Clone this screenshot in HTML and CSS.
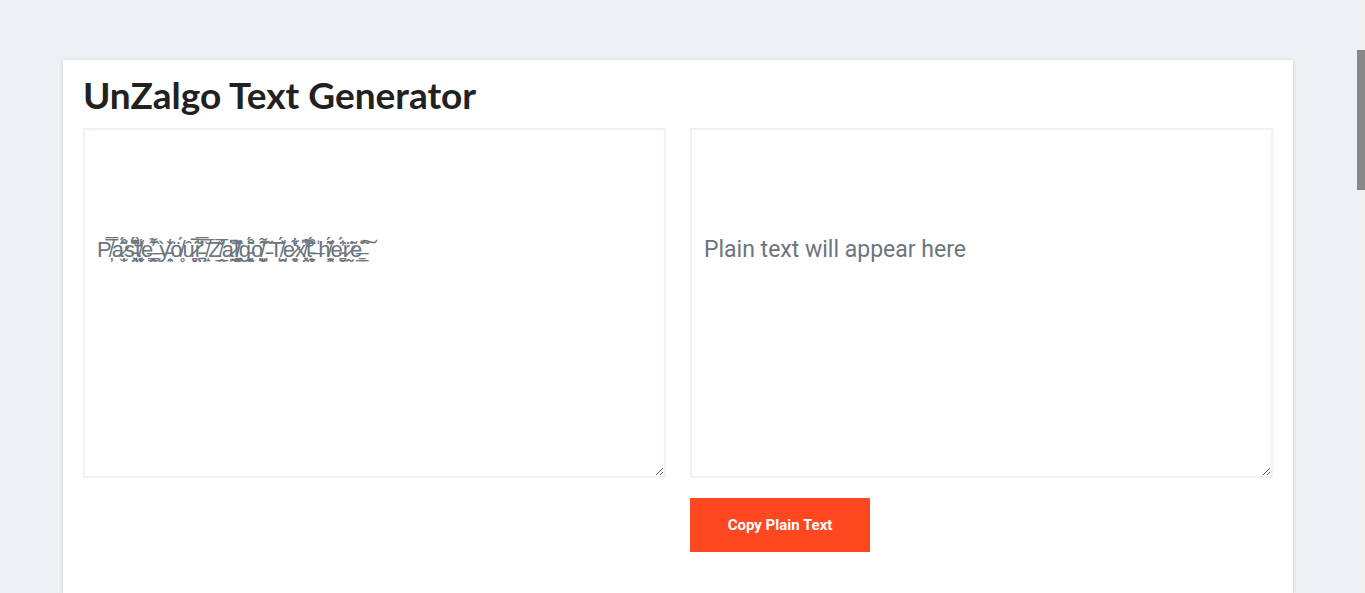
FILE: index.html
```
<!DOCTYPE html>
<html lang="en">
<head>
    <meta charset="UTF-8">
    <meta name="viewport" content="width=device-width, initial-scale=1.0">
    <title>UnZalgo Text Generator</title>
    <link rel="stylesheet" href="styles.css">
</head>
<body>
    <main>
        <section class="card">
            <h1>UnZalgo Text Generator</h1>
            <div class="columns">
                <div class="column">
                    <textarea id="zalgo-text" class="zalgo" aria-label="Zalgo text" placeholder="P&#x338;&#x305;&#x33f;&#x326;a&#x337;&#x30b;&#x344;&#x352;&#x31c;&#x32b;&#x34e;s&#x335;&#x344;&#x346;&#x313;&#x30f;&#x324;&#x349;&#x353;t&#x338;&#x312;&#x300;&#x33e;&#x354;&#x32c;&#x31e;e&#x336;&#x313;&#x34c;&#x351;&#x30a;&#x333;&#x32d;&#x347; &#x336;&#x30f;&#x326;y&#x335;&#x33e;&#x30c;&#x357;&#x32f;&#x31f;o&#x338;&#x308;&#x301;&#x325;u&#x337;&#x311;&#x303;&#x31a;&#x33b;&#x32e;r&#x335;&#x312;&#x33f;&#x350;&#x324;&#x32a; &#x338;&#x305;&#x306;&#x31d;Z&#x338;&#x33e;&#x305;&#x310;&#x32d;&#x332;a&#x337;&#x346;&#x310;&#x30d;&#x32b;&#x330;&#x34d;l&#x338;&#x34a;&#x30f;&#x313;&#x333;&#x32c;&#x353;g&#x335;&#x344;&#x30c;&#x352;&#x31f;&#x324;&#x348;o&#x338;&#x34c;&#x313;&#x311;&#x318;&#x32c;&#x33a; &#x335;&#x304;&#x30b;&#x323;T&#x338;&#x304;&#x350;&#x301;&#x33a;&#x32d;e&#x337;&#x30e;&#x312;&#x34b;&#x317;&#x32c;&#x349;x&#x338;&#x33e;&#x346;&#x30a;&#x316;&#x324;&#x353;t&#x335;&#x313;&#x35b;&#x344;&#x352;&#x31f;&#x32c; &#x336;&#x30d;&#x323;h&#x338;&#x34a;&#x30c;&#x301;&#x320;&#x32d;&#x34e;e&#x335;&#x313;&#x344;&#x333;&#x32c;r&#x337;&#x308;&#x303;&#x330;e&#x336;&#x30e;&#x303;&#x332;&#x333;&#x360;"></textarea>
                </div>
                <div class="column">
                    <textarea id="plain-text" aria-label="Plain text" placeholder="Plain text will appear here"></textarea>
                    <button type="button" class="copy">Copy Plain Text</button>
                </div>
            </div>
        </section>
    </main>
    <div class="scroll-track" aria-hidden="true">
        <div class="scroll-thumb"></div>
    </div>
</body>
</html>
```
FILE: styles.css
```
* {
    box-sizing: border-box;
}

body {
    display: flex;
    min-height: 100vh;
    margin: 0;
    background-color: #edf0f5;
    color: #212121;
    font-family: Roboto, sans-serif;
}

main {
    flex: 1;
    display: flex;
    padding: 60px 64px 0 63px;
}

.card {
    flex: 1;
    padding: 16px 20px 20px;
    background-color: white;
    box-shadow: 0 1px 4px rgba(0, 0, 0, 0.15);
}

h1 {
    margin: 0 0 14px;
    font-family: Lato, sans-serif;
    font-size: 37px;
    font-weight: 700;
    line-height: 38px;
}

.columns {
    display: flex;
    gap: 24px;
}

.column {
    flex: 1;
}

textarea {
    display: block;
    width: 100%;
    height: 350px;
    margin-bottom: 20px;
    padding: 107px 12px 12px;
    border: 2px solid #ecf2fc;
    border-radius: 0;
    background-color: white;
    color: #212121;
    font-family: Roboto, sans-serif;
    font-size: 23px;
    line-height: 26px;
    resize: both;
}

textarea:focus {
    outline: none;
    border-color: #ff481f;
}

textarea::placeholder {
    color: #6c757d;
    opacity: 1;
}

.zalgo {
    font-family: "Liberation Sans", sans-serif;
    font-size: 22px;
}

.copy {
    width: 180px;
    height: 54px;
    border: none;
    background-color: #ff481f;
    color: white;
    font-family: Roboto, sans-serif;
    font-size: 15px;
    font-weight: 700;
    cursor: pointer;
}

.scroll-track {
    width: 8px;
    padding-top: 50px;
    background-color: #f1f1f1;
}

.scroll-thumb {
    height: 140px;
    background-color: #888;
}
```
